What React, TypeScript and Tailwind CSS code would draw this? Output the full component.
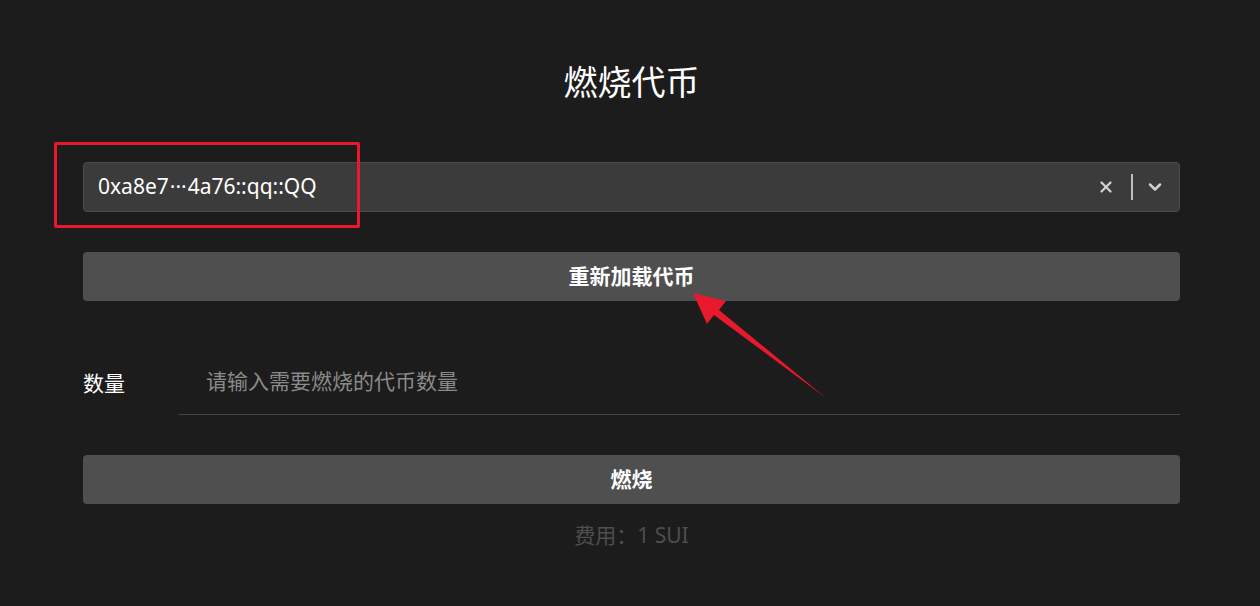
import { X, ChevronDown } from "lucide-react";

const FONT = "font-['Noto_Sans','Noto_Sans_CJK_SC',sans-serif]";

/**
 * Burn token page
 */
const App = () => {
  return (
    <div className={`relative min-h-[606px] w-full bg-[#1c1c1c] text-white ${FONT}`}>
      <div className="ml-[83px] mr-[80px] flex flex-col pt-[58px]">
        {/* Title */}
        <h1 className="text-center text-[34px] leading-[48px] text-white">燃烧代币</h1>

        {/* Token select */}
        <div className="mt-[56px] flex h-[50px] items-center rounded-[4px] border border-[#4b4b4b] bg-[#3b3b3b] pl-[14px] pr-[14px]">
          <span className="flex-1 text-[21px] text-white">
            0xa8e7<span className="px-[1px]">···</span>4a76::qq::QQ
          </span>
          <X className="mr-[16px] h-[18px] w-[18px] text-[#d0d0d0]" strokeWidth={3} />
          <div className="h-[26px] w-[2px] bg-[#bdbdbd]" />
          <ChevronDown className="ml-[12px] h-[20px] w-[20px] text-[#d0d0d0]" strokeWidth={3} />
        </div>

        {/* Reload button */}
        <button className="mt-[40px] h-[49px] rounded-[4px] bg-[#4f4f4f] text-[21px] font-bold text-white">
          重新加载代币
        </button>

        {/* Amount */}
        <div className="mt-[48px] flex items-center">
          <span className="w-[95px] pt-[4px] text-[21px] text-white">数量</span>
          <div className="flex h-[66px] flex-1 items-center border-b border-[#444444] pl-[28px]">
            <span className="text-[21px] text-[#8a8a8a]">请输入需要燃烧的代币数量</span>
          </div>
        </div>

        {/* Burn button */}
        <button className="mt-[40px] h-[49px] rounded-[4px] bg-[#4f4f4f] text-[21px] font-bold text-white">
          燃烧
        </button>

        <p className="mt-[16px] text-center text-[21px] text-[#4e4e4e]">费用：1 SUI</p>
      </div>

      {/* Annotation: red box */}
      <div className="absolute left-[54px] top-[142px] h-[86px] w-[306px] rounded-[2px] border-[3px] border-[#e8192c]" />

      {/* Annotation: arrow */}
      <svg className="absolute left-0 top-0" width="1260" height="606" viewBox="0 0 1260 606">
        <polygon
          points="693,293 726,301 719,310 826,398 714,315 707,324"
          fill="#e8192c"
        />
      </svg>
    </div>
  );
};

export default App;
